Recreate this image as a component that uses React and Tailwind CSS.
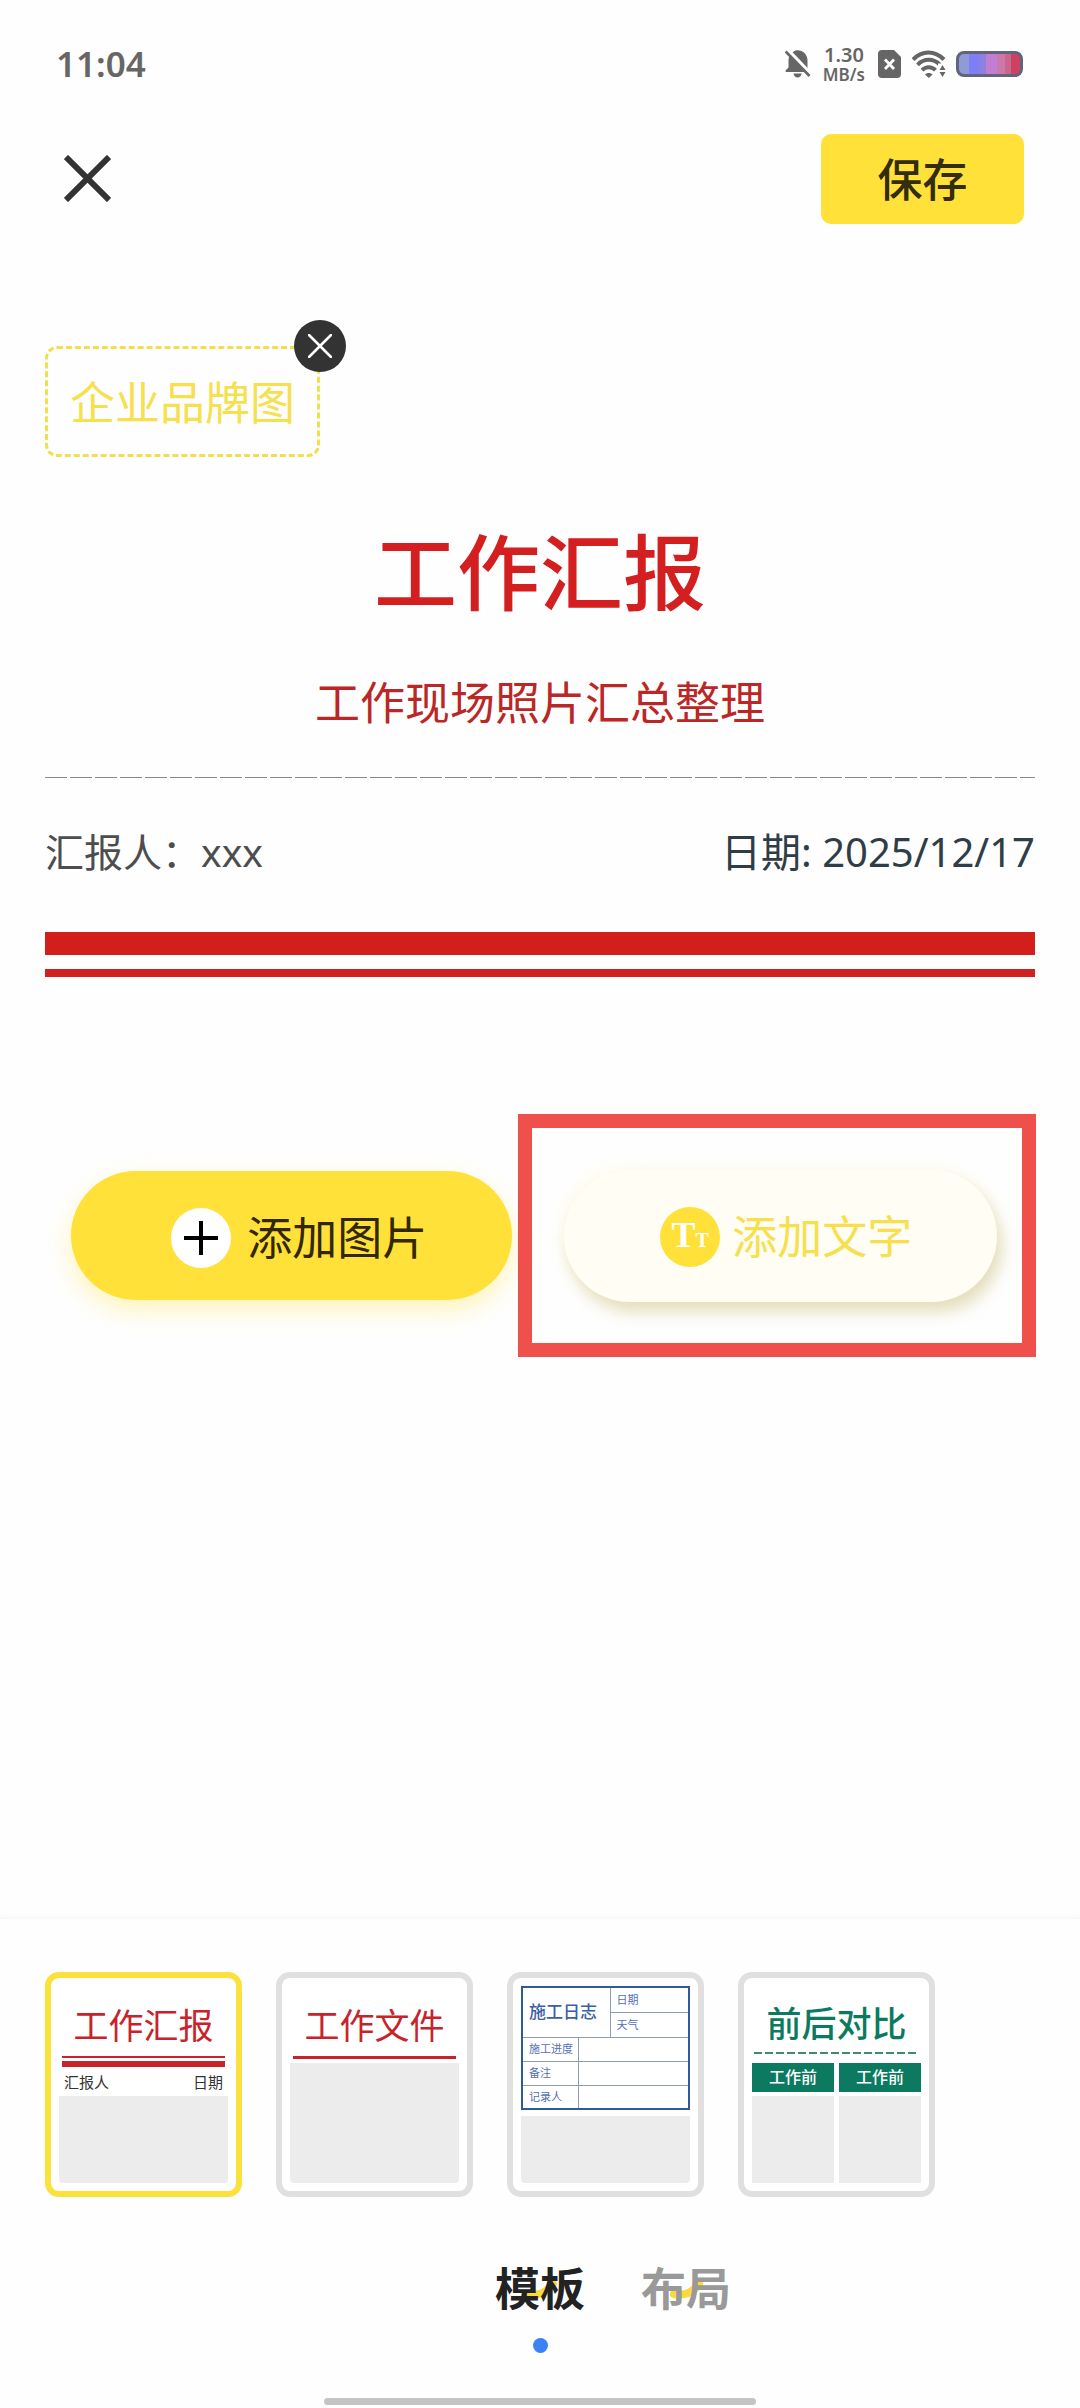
import React, { useState } from 'react';
import clsx from 'clsx';

const StatusIcons = () => (
  <div className="flex items-center text-[#666666]">
    <svg width="26" height="30" viewBox="0 0 26 30" className="mr-3" aria-hidden="true">
      <path
        fill="currentColor"
        d="M6.5 4.5C8 2.6 10 1.6 12.2 1.3c6.2.1 10.3 4.6 10.3 10v8.2l2 3.5H1c-.6-.5-.6-1.200 0-2L3.500 18.500V11c0-2.500 1-4.800 3-6.500zM8.500 24.500h8.200c-.6 2.600-2 4-4.100 4s-3.500-1.400-4.100-4z"
      />
      <path d="M3 1l24 25" stroke="#fefefe" strokeWidth="3.500" />
      <path d="M0.700 2.500L24.500 27" stroke="currentColor" strokeWidth="2.600" />
    </svg>
    <div className="mr-[13px] flex flex-col items-center gap-px font-semibold">
      <span className="text-[20px] leading-[20px]">1.30</span>
      <span className="text-[17px] leading-[17px]">MB/s</span>
    </div>
    <svg width="23" height="28" viewBox="0 0 23 28" className="mr-[11px]" aria-hidden="true">
      <path fill="currentColor" d="M4 0h12l7 7v17a4 4 0 0 1-4 4H4a4 4 0 0 1-4-4V4a4 4 0 0 1 4-4z" />
      <path d="M7 9.500l9 9.500M16 9.500L7 19" stroke="#fefefe" strokeWidth="2.800" />
    </svg>
    <svg width="34" height="28" viewBox="0 0 34 28" className="mr-[10px]" aria-hidden="true">
      <g fill="none" stroke="currentColor" strokeWidth="4">
        <path d="M1 9.500C10 0 23 0 32 9.500" />
        <path d="M5.500 14.800c6.500-6.600 16-6.600 22.500 0" />
        <path d="M10 20.200c4-4 9.500-4 13.500 0" />
      </g>
      <path fill="currentColor" d="M13 24.500c2-2 5.500-2 7.500 0L16.800 28z" />
      <path fill="#fefefe" d="M26 13.500h9v15h-9z" />
      <path fill="currentColor" d="M30.500 15l3 5h-6zM30.500 27l3-5h-6z" />
    </svg>
    <div className="h-[26px] w-[67px] rounded-[8px] border-[3px] border-[#63637d] bg-[linear-gradient(90deg,#8f9bd6_0_17%,#7f7ff5_17%_33%,#8c80e0_33%_44%,#c07fd0_44%_62%,#cc78ac_62%_76%,#c9668c_76%_86%,#cc4260_86%)]" />
  </div>
);

const CrossIcon = ({ size, strokeWidth, cap = 'butt' }) => (
  <svg width={size} height={size} viewBox="0 0 48 48" fill="none" stroke="currentColor" strokeWidth={strokeWidth} strokeLinecap={cap} aria-hidden="true">
    <path d="M2 2l44 44M46 2L2 46" />
  </svg>
);

const ReportPreview = () => (
  <>
    <span className="mt-4 text-center text-[35px] leading-[48px] text-[#c8232a]">工作汇报</span>
    <span className="mx-[3px] mt-[6px] h-[2px] bg-[#c8232a]" />
    <span className="mx-[3px] mt-[3px] h-[6px] bg-[#c8232a]" />
    <span className="mx-[5px] mt-[5px] flex justify-between text-[15px] leading-[20px] text-[#333333]">
      <span>汇报人</span>
      <span>日期</span>
    </span>
    <span className="mt-1 flex-1 rounded-b-[4px] bg-[#ececec]" />
  </>
);

const FilePreview = () => (
  <>
    <span className="mt-4 text-center text-[35px] leading-[48px] text-[#c8232a]">工作文件</span>
    <span className="mx-[3px] mt-[6px] h-[3px] bg-[#c8232a]" />
    <span className="mt-1 flex-1 rounded-b-[4px] bg-[#ececec]" />
  </>
);

const LogPreview = () => (
  <>
    <table className="w-full table-fixed border-collapse border-2 border-[#2f5a9c] text-left text-[11px] leading-[12px] text-[#5570b0]">
      <colgroup>
        <col className="w-[56px]" />
        <col className="w-[32px]" />
        <col />
      </colgroup>
      <tbody>
        <tr className="h-[25px]">
          <th colSpan={2} rowSpan={2} className="border border-[#8c9cba] pl-[6px] text-[17px] leading-[20px] font-medium whitespace-nowrap text-[#3b5ea6]">施工日志</th>
          <td className="border border-[#8c9cba] pl-[6px]">日期</td>
        </tr>
        <tr className="h-[25px]">
          <td className="border border-[#8c9cba] pl-[6px]">天气</td>
        </tr>
        {['施工进度', '备注', '记录人'].map((label) => (
          <tr key={label} className="h-[24px]">
            <td className="border border-[#8c9cba] pl-[6px] whitespace-nowrap">{label}</td>
            <td colSpan={2} className="border border-[#8c9cba]" />
          </tr>
        ))}
      </tbody>
    </table>
    <span className="mt-[6px] flex-1 rounded-b-[4px] bg-[#ececec]" />
  </>
);

const ComparePreview = () => (
  <>
    <span className="mt-[14px] text-center text-[35px] leading-[48px] font-medium text-[#0b7a60]">前后对比</span>
    <span className="mx-[2px] mt-[4px] h-[2px] bg-[repeating-linear-gradient(90deg,#3f8a72_0_8px,transparent_8px_11px)]" />
    <span className="mt-[9px] grid flex-1 grid-cols-2 grid-rows-[29px_1fr] gap-x-[5px] gap-y-[4px]">
      <span className="bg-[#0b7a60] text-center text-[16px] leading-[28px] font-medium text-white">工作前</span>
      <span className="bg-[#0b7a60] text-center text-[16px] leading-[28px] font-medium text-white">工作前</span>
      <span className="bg-[#ececec]" />
      <span className="bg-[#ececec]" />
    </span>
  </>
);

const templates = [
  { id: 'report', name: '工作汇报', Preview: ReportPreview },
  { id: 'file', name: '工作文件', Preview: FilePreview },
  { id: 'log', name: '施工日志', Preview: LogPreview },
  { id: 'compare', name: '前后对比', Preview: ComparePreview },
];

const TemplateCard = ({ name, selected, onClick, children }) => (
  <button
    type="button"
    aria-label={name}
    aria-pressed={selected}
    onClick={onClick}
    className={clsx(
      'flex h-[225px] w-[197px] shrink-0 flex-col rounded-[14px] border-[6px] bg-white p-2',
      selected ? 'border-[#fbe13c]' : 'border-[#e0e0e0]'
    )}
  >
    {children}
  </button>
);

const TabButton = ({ label, active, onClick }) => (
  <button
    type="button"
    role="tab"
    aria-selected={active}
    onClick={onClick}
    className={clsx('relative isolate text-[45px] leading-[60px] font-bold', active ? 'text-[#222222]' : 'text-[#999999]')}
  >
    {/* smile stroke behind the label */}
    <svg width="40" height="20" viewBox="0 0 40 20" className="absolute top-[22px] left-[28px] -z-10" aria-hidden="true">
      <path d="M5 13c11 2 18-1 25-10" fill="none" stroke="#fcd93a" strokeWidth="8" strokeLinecap="round" />
    </svg>
    {label}
  </button>
);

export default function App() {
  const [template, setTemplate] = useState('report');
  const [tab, setTab] = useState('template');

  return (
    <div className="flex min-h-screen flex-col bg-[#fefefe] font-['Noto_Sans','Noto_Sans_CJK_SC',sans-serif]">
      <div className="flex h-[128px] items-center justify-between pr-[57px] pl-[56px]">
        <span className="text-[35px] leading-[40px] font-semibold text-[#666666]">11:04</span>
        <StatusIcons />
      </div>

      <header className="flex h-[101px] items-center justify-between pr-[56px] pl-[64px]">
        <button type="button" aria-label="关闭" className="text-[#333333]">
          <CrossIcon size={47} strokeWidth={6} />
        </button>
        <button type="button" className="h-[90px] w-[203px] rounded-[10px] bg-[#ffe139] pt-[2px] text-[45px] leading-[60px] font-medium text-[#332d0b]">
          保存
        </button>
      </header>

      <main className="flex flex-1 flex-col pb-16">
        <section className="mt-[117px] px-[45px]">
          <div className="relative flex h-[111px] w-[275px] items-center justify-center rounded-[12px] border-[3px] border-dashed border-[#f2df50] pt-[3px]">
            <span className="text-[45px] leading-[60px] whitespace-nowrap text-[#f6e04d]">企业品牌图</span>
            <button type="button" aria-label="移除" className="absolute -top-[29px] -right-[29px] flex size-[52px] items-center justify-center rounded-full bg-[#333333] text-white">
              <CrossIcon size={24} strokeWidth={5} cap="round" />
            </button>
          </div>

          <h1 className="mt-[73px] text-center text-[83px] leading-[84px] font-medium text-[#d31f1f]">工作汇报</h1>
          <p className="mt-[59px] text-center text-[45px] leading-[60px] text-[#bb2626]">工作现场照片汇总整理</p>

          <div className="mt-[44px] h-px bg-[repeating-linear-gradient(90deg,#888888_0_22px,transparent_22px_25px)]" />

          <div className="mt-[44px] flex justify-between leading-[60px]">
            <span className="text-[39px] text-[#4d4d4f]">汇报人：xxx</span>
            <span className="text-[40px] text-[#2f3d47]">日期: 2025/12/17</span>
          </div>

          <div className="mt-[50px] h-[23px] bg-[#d31f1c]" />
          <div className="mt-[14px] h-[8px] bg-[#d02022]" />
        </section>

        <section className="mt-[137px] grid grid-cols-[441fr_519fr] items-center gap-[6px] pr-[44px] pl-[71px]">
          <button type="button" className="flex h-[129px] items-center justify-center gap-4 rounded-full bg-[#ffe139] pt-1 pl-4 text-[45px] leading-[60px] text-[#332700] shadow-[0_10px_24px_rgba(255,225,57,0.35)]">
            <span className="flex size-[60px] items-center justify-center rounded-full bg-white">
              <svg width="34" height="34" viewBox="0 0 34 34" stroke="#000000" strokeWidth="4" aria-hidden="true">
                <path d="M17 0v34M0 17h34" />
              </svg>
            </span>
            添加图片
          </button>
          {/* highlighted entry */}
          <div className="flex h-[243px] items-center border-[14px] border-[#f0504b] pr-[25px] pl-[32px]">
            <button type="button" className="flex h-[132px] flex-1 items-center justify-center gap-3 rounded-full bg-[#fffdf4] pt-[2px] pl-3 text-[45px] leading-[60px] text-[#f6e04d] shadow-[5px_10px_16px_rgba(190,175,90,0.4),-4px_-4px_14px_rgba(255,253,240,0.9)]">
              <span className="flex size-[60px] items-baseline justify-center rounded-full bg-[#ffe139] font-['Liberation_Serif',serif] leading-[56px] font-bold text-white">
                <span className="text-[36px]">T</span>
                <span className="text-[20px]">T</span>
              </span>
              添加文字
            </button>
          </div>
        </section>
      </main>

      <footer className="border-t-2 border-[#f8f8f8] pt-[53px] shadow-[0_-2px_4px_rgba(0,0,0,0.02)]">
        <div className="flex gap-[34px] pl-[45px]">
          {templates.map(({ id, name, Preview }) => (
            <TemplateCard key={id} name={name} selected={template === id} onClick={() => setTemplate(id)}>
              <Preview />
            </TemplateCard>
          ))}
        </div>

        <div role="tablist" className="mt-[62px] grid grid-cols-[1fr_auto_1fr]">
          <div className="col-start-2">
            <TabButton label="模板" active={tab === 'template'} onClick={() => setTab('template')} />
          </div>
          <div className="pl-[56px]">
            <TabButton label="布局" active={tab === 'layout'} onClick={() => setTab('layout')} />
          </div>
        </div>
        <div className="mx-auto mt-[19px] size-[15px] rounded-full bg-[#3b82f6]" />
        <div className="mx-auto mt-[45px] mb-[3px] h-[7px] w-2/5 rounded-full bg-[#c4c4c4]" />
      </footer>
    </div>
  );
}
